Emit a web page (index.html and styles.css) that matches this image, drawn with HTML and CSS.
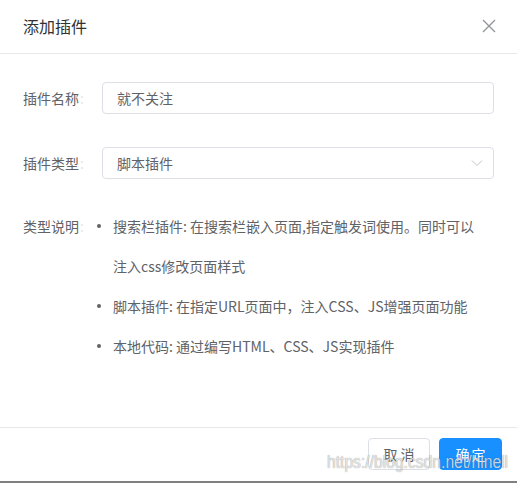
FILE: index.html
```html
<!DOCTYPE html>
<html lang="zh-CN">
<head>
<meta charset="utf-8">
<title>添加插件</title>
<link rel="stylesheet" href="styles.css">
</head>
<body>
<div class="dialog">
  <div class="header">
    <span class="title">添加插件</span>
    <svg class="close" width="14" height="14" viewBox="0 0 14 14"><path d="M1 1L13 13M13 1L1 13" stroke="#909399" stroke-width="1.3" fill="none"/></svg>
  </div>
  <div class="body">
    <div class="row">
      <label class="label">插件名称<span class="colon">:</span></label>
      <div class="input">就不关注</div>
    </div>
    <div class="row">
      <label class="label">插件类型<span class="colon">:</span></label>
      <div class="input select">
        <span>脚本插件</span>
        <svg width="12" height="8" viewBox="0 0 12 8"><path d="M1 1.5L6 6.5L11 1.5" stroke="#c0c4cc" stroke-width="1" fill="none"/></svg>
      </div>
    </div>
    <div class="row desc-row">
      <label class="label">类型说明<span class="colon">:</span></label>
      <ul class="desc">
        <li>搜索栏插件: 在搜索栏嵌入页面,指定触发词使用。同时可以注入css修改页面样式</li>
        <li>脚本插件: 在指定URL页面中，注入CSS、JS增强页面功能</li>
        <li>本地代码: 通过编写HTML、CSS、JS实现插件</li>
      </ul>
    </div>
  </div>
  <div class="footer">
    <button class="btn">取 消</button>
    <button class="btn primary">确定</button>
  </div>
  <div class="watermark">https://blog.csdn.net/hlnell</div>
</div>
<div class="bottom-bar"></div>
</body>
</html>
```

FILE: styles.css
```css
* { box-sizing: border-box; }
html, body { margin: 0; padding: 0; background: #fff; }
body {
  font-family: "Noto Sans CJK SC", "Noto Sans", "Liberation Sans", sans-serif;
  font-size: 14px;
  color: #606266;
  width: 517px;
  height: 483px;
  overflow: hidden;
}
.dialog {
  position: relative;
  height: 481px;
  display: flex;
  flex-direction: column;
}
.header {
  height: 54px;
  border-bottom: 1px solid #e8e8e8;
  display: flex;
  align-items: center;
  justify-content: space-between;
  padding: 0 21px 0 23px;
}
.title {
  font-size: 16px;
  color: #303133;
  line-height: 20px;
  margin-top: -1px;
}
.close { display: block; margin-top: -1px; }
.body {
  flex: 1;
  padding: 28px 23px 0 23px;
}
.row {
  display: flex;
  align-items: center;
  margin-bottom: 33px;
}
.label {
  width: 79px;
  flex: none;
  line-height: 20px;
  color: #606266;
}
.colon { color: #e4e6ea; margin-left: 1px; }
.input {
  flex: 1;
  height: 32px;
  border: 1px solid #dcdfe6;
  border-radius: 4px;
  padding: 0 14px;
  line-height: 30px;
  color: #606266;
}
.select {
  display: flex;
  align-items: center;
  justify-content: space-between;
  padding-right: 10px;
}
.select svg { display: block; }
.desc-row {
  align-items: flex-start;
  margin-top: -6px;
  margin-bottom: 0;
}
.desc-row .label { line-height: 40px; }
.desc {
  margin: 0;
  padding: 0 0 0 11px;
  width: 390px;
  list-style: none;
}
.desc li {
  position: relative;
  line-height: 40px;
  max-width: 372px;
}
.desc li::before {
  content: "";
  position: absolute;
  left: -16px;
  top: 18px;
  width: 4px;
  height: 4px;
  border-radius: 50%;
  background: #606266;
}
.footer {
  height: 54px;
  border-top: 1px solid #e8e8e8;
  display: flex;
  justify-content: flex-end;
  align-items: flex-start;
  padding: 10px 15px 0 0;
  gap: 9px;
}
.btn {
  height: 32px;
  width: 62px;
  border: 1px solid #dcdfe6;
  border-radius: 4px;
  background: #fff;
  color: #606266;
  font-family: inherit;
  font-size: 14px;
  padding: 0;
  line-height: 30px;
}
.btn.primary {
  width: 63px;
  background: #1890ff;
  border-color: #1890ff;
  color: #fff;
  letter-spacing: 2px;
  text-indent: 2px;
}
.watermark {
  position: absolute;
  left: 327px;
  top: 451px;
  font-family: "Liberation Sans", Arial, sans-serif;
  font-size: 18px;
  line-height: 22px;
  white-space: nowrap;
  color: rgba(255,255,255,0.75);
  text-shadow: 0 0 1px rgba(0,0,0,0.35), 0 0 1px rgba(0,0,0,0.2);
  pointer-events: none;
  transform: scaleX(0.87);
  transform-origin: left top;
}
.bottom-bar {
  height: 2px;
  background: #808080;
}
```
